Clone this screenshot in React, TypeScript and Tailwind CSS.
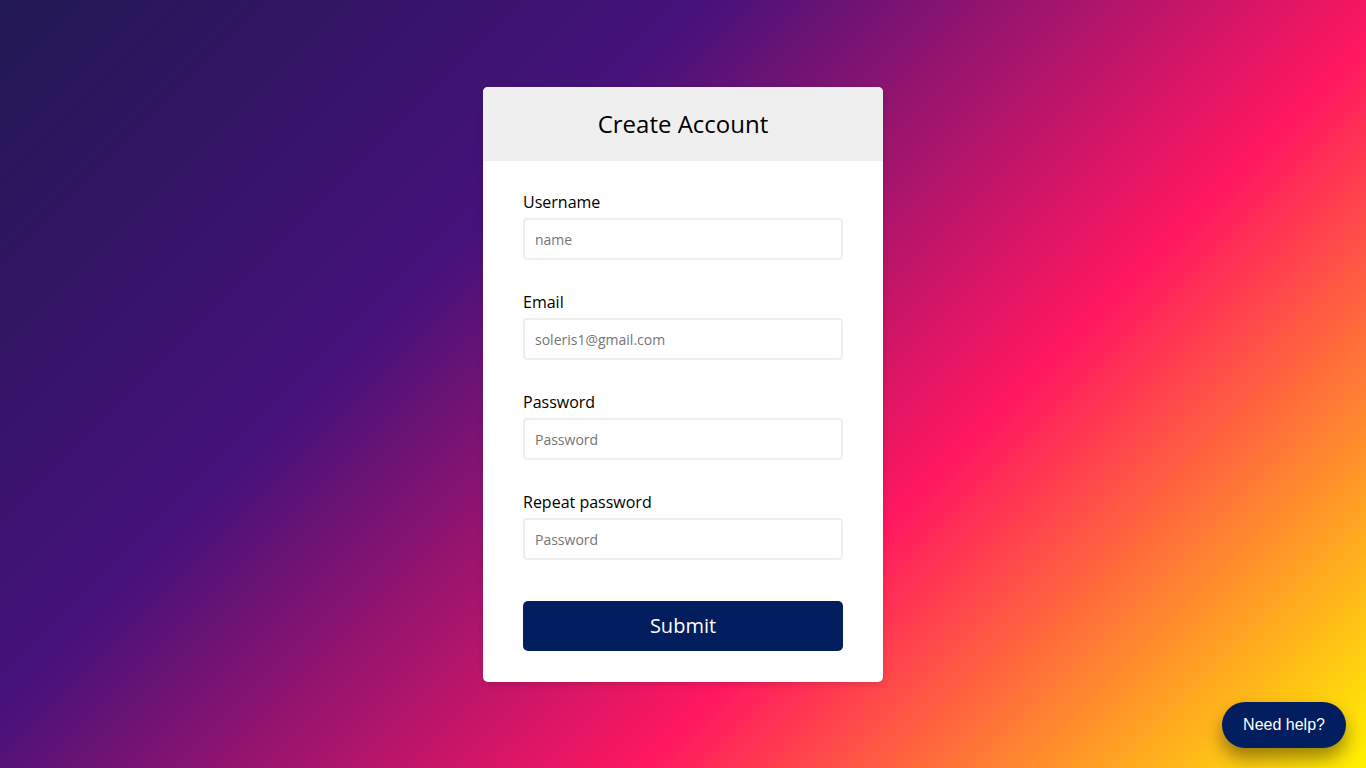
import React from "react";

const fields = [
  { label: "Username", placeholder: "name", type: "text" },
  { label: "Email", placeholder: "soleris1@gmail.com", type: "email" },
  { label: "Password", placeholder: "Password", type: "password" },
  { label: "Repeat password", placeholder: "Password", type: "password" },
];

export default function App() {
  return (
    <div className="relative min-h-screen w-full bg-[linear-gradient(135deg,#221853_0%,#45127a_33%,#ff1760_66%,#fff200_100%)] font-['Open_Sans',sans-serif] flex justify-center pt-[87px]">
      <div className="w-[400px] h-[595px] bg-white rounded-[5px] overflow-hidden shadow-[0_2px_6px_rgba(0,0,0,0.15)] flex flex-col">
        <div className="h-[74px] bg-[#efefef] flex items-center justify-center">
          <h1 className="text-[24px] leading-[32px] text-black font-normal">Create Account</h1>
        </div>
        <form className="px-[40px] pt-[29px] flex flex-col" onSubmit={(e) => e.preventDefault()}>
          {fields.map((f, i) => (
            <div key={i} className={i < fields.length - 1 ? "flex flex-col mb-[30px]" : "flex flex-col"}>
              <label className="text-[16px] leading-[24px] text-black mb-[4px]">{f.label}</label>
              <input
                type={f.type}
                placeholder={f.placeholder}
                className="h-[42px] w-full border-2 border-[#eeeeee] rounded-[4px] px-[10px] text-[14px] text-[#333] placeholder:text-[#757575] outline-none font-['Open_Sans',sans-serif]"
              />
            </div>
          ))}
          <button
            type="submit"
            className="mt-[41px] h-[50px] w-full bg-[#021e5e] text-white text-[20px] rounded-[5px] font-['Open_Sans',sans-serif]"
          >
            Submit
          </button>
        </form>
      </div>
      <button className="absolute right-[20px] bottom-[20px] w-[124px] h-[46px] rounded-full bg-[#021e5e] text-white text-[16px] font-['Liberation_Sans',Arial,sans-serif] shadow-[0_10px_18px_rgba(0,0,0,0.4)]">
        Need help?
      </button>
    </div>
  );
}
